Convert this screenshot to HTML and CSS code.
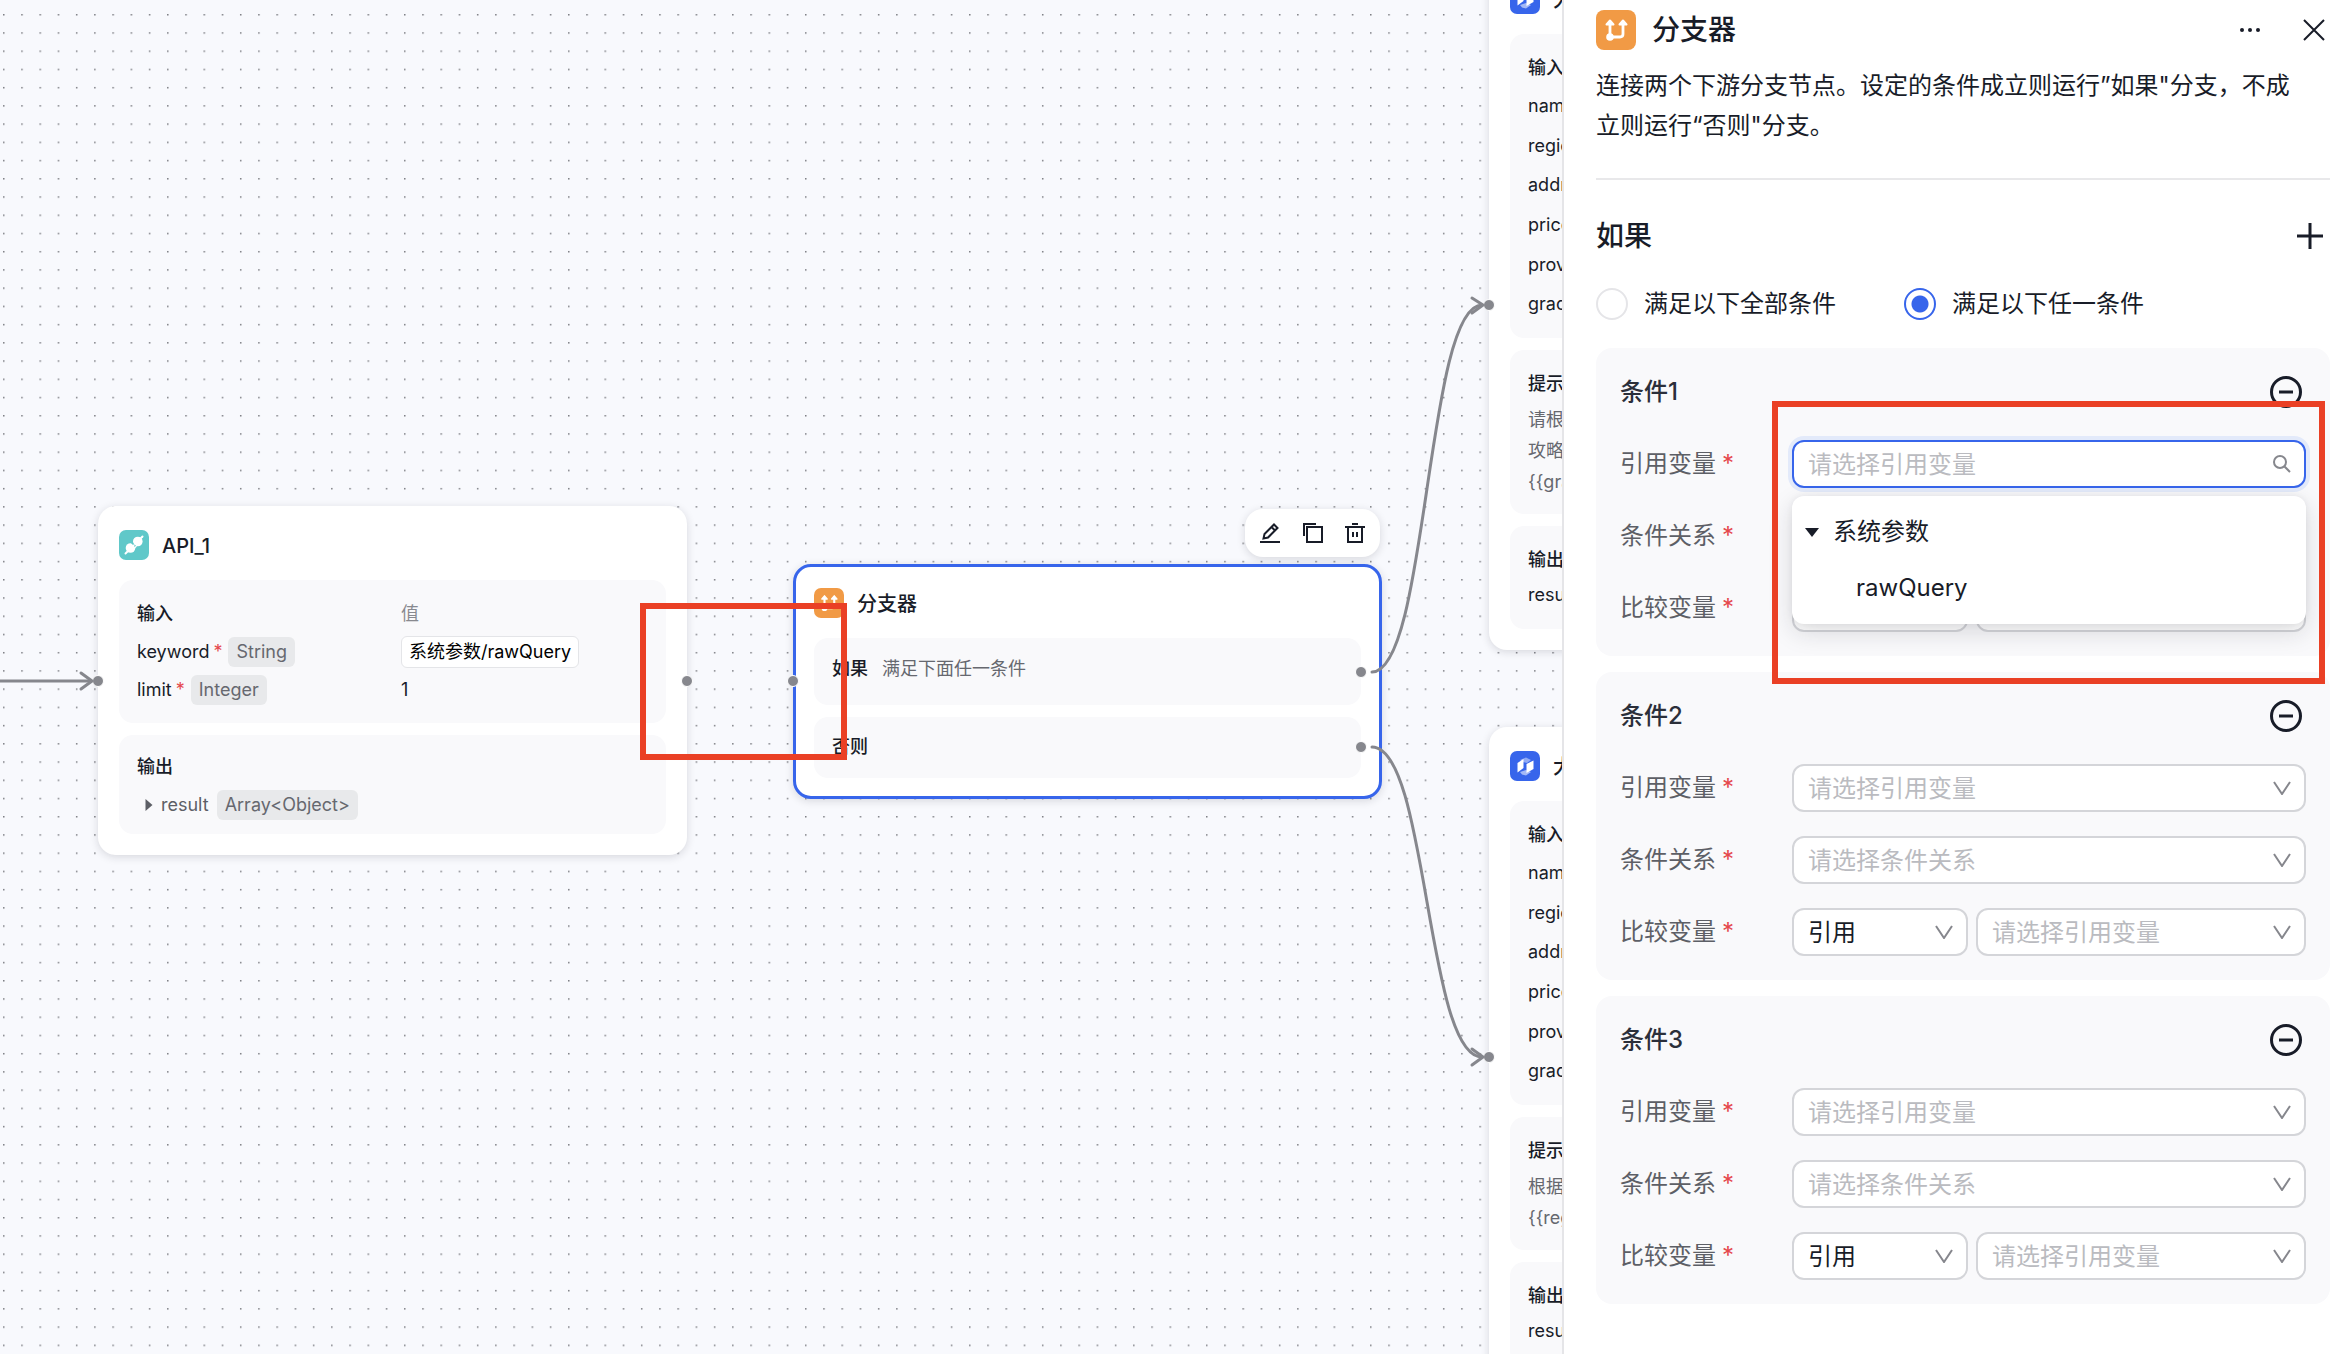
FILE: index.html
```html
<!DOCTYPE html>
<html lang="zh-CN">
<head>
<meta charset="utf-8">
<title>分支器</title>
<link rel="stylesheet" href="styles.css">
</head>
<body>
<svg class="defs" aria-hidden="true">
  <symbol id="chevron" viewBox="0 0 18 14"><path d="M1 1l8 12 8-12" fill="none" stroke="currentColor" stroke-width="2"/></symbol>
  <symbol id="minus" viewBox="0 0 32 32"><circle cx="16" cy="16" r="14.5" fill="none" stroke="currentColor" stroke-width="3"/><path d="M9 16h14" stroke="currentColor" stroke-width="3"/></symbol>
  <symbol id="branch" viewBox="0 0 40 40"><path d="M14 27V14M14 27H24Q27 27 27 24V14" fill="none" stroke="#fff" stroke-width="2.8"/><path d="M14 10.500l3.500 4h-7zM27 10.500l3.500 4h-7z" fill="#fff" stroke="#fff" stroke-width="2" stroke-linejoin="round"/><circle cx="14" cy="27" r="3.800" fill="#fff"/></symbol>
  <symbol id="model" viewBox="0 0 30 30"><path d="M10 9l6-2.500 5 2.500-4 3-4-1z" fill="#fff" opacity=".45"/><path d="M10 21l6-2 5 2-5 3.500-4-1z" fill="#fff" opacity=".55"/><path d="M7.500 12l6-4v9l-6 4.500z" fill="#fff"/><path d="M16.500 13l7-3.500V18l-7 4z" fill="#fff"/></symbol>
</svg>
<div class="app">
  <main class="canvas">
    <svg class="layer" aria-hidden="true">
      <defs><pattern id="grid" x="3" y="14" width="18.227" height="18.227" patternUnits="userSpaceOnUse"><rect width="1.5" height="1.5" fill="#7c7d83"/></pattern></defs>
      <rect width="100%" height="100%" fill="url(#grid)"/>
    </svg>

    <article class="node node-api">
      <header class="node-head"><span class="node-icon teal"><svg viewBox="0 0 30 30"><path d="M6.500 23.500L23.500 6.500" stroke="#fff" stroke-width="2" stroke-linecap="round"/><circle cx="11.500" cy="18" r="4.800" fill="#fff"/><circle cx="18.800" cy="11.500" r="4.800" fill="#fff"/><path d="M11 11l8 8" stroke="#60c8c9" stroke-width="1.600"/><path d="M13.500 16.500l2-2M15.500 18l2-2" stroke="#fff" stroke-width="1.200"/></svg></span><h2>API_1</h2></header>
      <section class="box">
        <div class="pair"><h3>输入</h3><span class="muted">值</span></div>
        <div class="pair"><span>keyword<i class="req">*</i><span class="tag">String</span></span><span><span class="value">系统参数/rawQuery</span></span></div>
        <div class="pair"><span>limit<i class="req">*</i><span class="tag">Integer</span></span><span>1</span></div>
      </section>
      <section class="box">
        <h3>输出</h3>
        <div class="result"><svg viewBox="0 0 7 12"><path d="M0 0l7 6-7 6z" fill="currentColor"/></svg><span>result</span><span class="tag">Array&lt;Object&gt;</span></div>
      </section>
      <span class="port in"></span><span class="port out"></span>
    </article>

    <div class="toolbar">
      <button type="button" aria-label="编辑"><svg viewBox="0 0 20 20"><path d="M0 19H20M3.500 15.500l1-4.500 9.500-9.500 3.500 3.500-9.500 9.500zM11.500 4l3.500 3.500"/></svg></button>
      <button type="button" aria-label="复制"><svg viewBox="0 0 20 20"><path d="M4 4H19V19H4zM1 13V1H13"/></svg></button>
      <button type="button" aria-label="删除"><svg viewBox="0 0 20 20"><path d="M0 4H20M3 4V19H17V4M7 1H13M8 9V14M12 9V14"/></svg></button>
    </div>

    <article class="node node-branch">
      <header class="node-head"><span class="node-icon orange"><svg viewBox="0 0 40 40"><use href="#branch"/></svg></span><h2>分支器</h2></header>
      <section class="box case first"><h3>如果</h3><span>满足下面任一条件</span><span class="port out"></span></section>
      <section class="box case"><h3>否则</h3><span class="port out"></span></section>
      <span class="port in"></span>
    </article>

    <article class="node node-model upper">
      <header class="node-head"><span class="node-icon blue"><svg viewBox="0 0 30 30"><use href="#model"/></svg></span><h2>大模型</h2></header>
      <section class="box"><h3>输入</h3>
        <ul class="params"><li>name</li><li>region</li><li>address</li><li>price</li><li>province</li><li>grade</li></ul></section>
      <section class="box prompt"><h3>提示词</h3><p>请根据<br>攻略<br>{{grade}}</p></section>
      <section class="box output"><h3>输出</h3><div>result</div></section>
      <span class="port in"></span>
    </article>

    <article class="node node-model lower">
      <header class="node-head"><span class="node-icon blue"><svg viewBox="0 0 30 30"><use href="#model"/></svg></span><h2>大模型</h2></header>
      <section class="box"><h3>输入</h3>
        <ul class="params"><li>name</li><li>region</li><li>address</li><li>price</li><li>province</li><li>grade</li></ul></section>
      <section class="box prompt"><h3>提示词</h3><p>根据<br>{{region}}</p></section>
      <section class="box output"><h3>输出</h3><div>result</div></section>
      <span class="port in"></span>
    </article>

    <svg class="layer edge" aria-hidden="true">
      <path d="M0 681H91"/><path d="M81 673l11 8-11 8"/>
      <path d="M1372 672C1428 672 1426 305 1482 305"/><path d="M1472 298l11 7-11 8"/>
      <path d="M1372 747C1428 747 1426 1057 1482 1057"/><path d="M1472 1049l11 8-11 8"/>
    </svg>
    <div class="mark mark-canvas"></div>
  </main>

  <aside class="panel">
    <header class="panel-head">
      <span class="panel-icon"><svg viewBox="0 0 40 40"><use href="#branch"/></svg></span>
      <h1>分支器</h1>
      <button type="button" aria-label="更多"><svg viewBox="0 0 22 22"><g fill="currentColor"><circle cx="3" cy="11" r="2"/><circle cx="11" cy="11" r="2"/><circle cx="19" cy="11" r="2"/></g></svg></button>
      <button type="button" aria-label="关闭"><svg viewBox="0 0 22 22"><path d="M1 1l20 20M21 1L1 21" stroke="currentColor" stroke-width="2"/></svg></button>
    </header>
    <p class="desc">连接两个下游分支节点。设定的条件成立则运行”如果"分支，不成立则运行“否则"分支。</p>
    <div class="if-head"><h2>如果</h2><button type="button" aria-label="添加条件"><svg viewBox="0 0 26 26"><path d="M13 0V26M0 13H26" stroke="currentColor" stroke-width="3"/></svg></button></div>
    <div class="radios">
      <label><input type="radio" name="mode">满足以下全部条件</label>
      <label><input type="radio" name="mode" checked>满足以下任一条件</label>
    </div>

    <section class="cond">
      <header><h3>条件1</h3><button type="button" aria-label="删除条件1"><svg><use href="#minus"/></svg></button></header>
      <div class="row"><label for="r1">引用变量<i class="req">*</i></label>
        <div class="field active"><input id="r1" type="text" placeholder="请选择引用变量"><svg class="search" viewBox="0 0 18 18"><circle cx="7" cy="7" r="6" fill="none" stroke="currentColor" stroke-width="2"/><path d="M11 11l6 6" stroke="currentColor" stroke-width="2"/></svg>
          <div class="popup" role="tree"><div role="treeitem"><svg viewBox="0 0 14 9"><path d="M0 0H14L7 9z" fill="currentColor"/></svg>系统参数</div><div role="treeitem" class="leaf">rawQuery</div></div>
        </div></div>
      <div class="row"><label for="c1">条件关系<i class="req">*</i></label>
        <div class="field"><select id="c1" class="empty"><option>请选择条件关系</option></select><svg><use href="#chevron"/></svg></div></div>
      <div class="row"><label for="t1">比较变量<i class="req">*</i></label>
        <div class="field short"><select id="t1"><option>引用</option></select><svg><use href="#chevron"/></svg></div>
        <div class="field"><select class="empty" aria-label="比较变量1"><option>请选择引用变量</option></select><svg><use href="#chevron"/></svg></div></div>
      <div class="mark mark-panel"></div>
    </section>

    <section class="cond">
      <header><h3>条件2</h3><button type="button" aria-label="删除条件2"><svg><use href="#minus"/></svg></button></header>
      <div class="row"><label for="r2">引用变量<i class="req">*</i></label>
        <div class="field"><select id="r2" class="empty"><option>请选择引用变量</option></select><svg><use href="#chevron"/></svg></div></div>
      <div class="row"><label for="c2">条件关系<i class="req">*</i></label>
        <div class="field"><select id="c2" class="empty"><option>请选择条件关系</option></select><svg><use href="#chevron"/></svg></div></div>
      <div class="row"><label for="t2">比较变量<i class="req">*</i></label>
        <div class="field short"><select id="t2"><option>引用</option></select><svg><use href="#chevron"/></svg></div>
        <div class="field"><select class="empty" aria-label="比较变量2"><option>请选择引用变量</option></select><svg><use href="#chevron"/></svg></div></div>
    </section>

    <section class="cond">
      <header><h3>条件3</h3><button type="button" aria-label="删除条件3"><svg><use href="#minus"/></svg></button></header>
      <div class="row"><label for="r3">引用变量<i class="req">*</i></label>
        <div class="field"><select id="r3" class="empty"><option>请选择引用变量</option></select><svg><use href="#chevron"/></svg></div></div>
      <div class="row"><label for="c3">条件关系<i class="req">*</i></label>
        <div class="field"><select id="c3" class="empty"><option>请选择条件关系</option></select><svg><use href="#chevron"/></svg></div></div>
      <div class="row"><label for="t3">比较变量<i class="req">*</i></label>
        <div class="field short"><select id="t3"><option>引用</option></select><svg><use href="#chevron"/></svg></div>
        <div class="field"><select class="empty" aria-label="比较变量3"><option>请选择引用变量</option></select><svg><use href="#chevron"/></svg></div></div>
    </section>
  </aside>
</div>
</body>
</html>
```
FILE: styles.css
```css
* { box-sizing: border-box; margin: 0; }
body, button, input, select { font-family: Inter, "Noto Sans CJK SC", sans-serif; color: #181c28; }
button { display: grid; place-items: center; padding: 0; border: 0; background: none; }
h1, h2, h3 { font-weight: 500; }
svg { display: block; }
.defs { position: absolute; width: 0; height: 0; }
.app { display: grid; grid-template-columns: 781fr 391fr; height: 100vh; overflow: hidden; }

/* canvas */
.canvas { position: relative; overflow: hidden; background: #f8f9fd; font-size: 18px; line-height: 30px; }
.layer { position: absolute; inset: 0; width: 100%; height: 100%; pointer-events: none; }
.edge { fill: none; stroke: #86878d; stroke-width: 3; stroke-linecap: round; stroke-linejoin: round; }
.node { position: absolute; display: flex; flex-direction: column; gap: 12px; width: 589px; padding: 24px 21px 21px; border-radius: 18px; background: #fff; box-shadow: 0 2px 8px rgba(24, 28, 40, .15); }
.node-api { left: 98px; top: 506px; }
.node-branch { left: 793px; top: 564px; padding: 21px 18px 18px; border: 3px solid #3765eb; }
.node-model { left: 1489px; }
.upper { top: -40px; }
.lower { top: 727px; }
.node-head { display: flex; align-items: center; gap: 13px; height: 30px; margin-bottom: 8px; }
.node-head h2 { padding-top: 2px; font-size: 20px; }
.node-icon { width: 30px; height: 30px; border-radius: 7px; }
.teal { background: #60c8c9; }
.orange, .panel-icon { background: #f19a45; }
.blue { background: #3765eb; }
.box { position: relative; padding: 19px 18px 14px; border-radius: 14px; background: #f9f9fb; }
.box h3 { font-size: 18px; }
.pair { display: grid; grid-template-columns: 264px 1fr; align-items: center; height: 38px; }
.pair:first-child { height: 30px; margin-bottom: 4px; }
.muted { color: #88898f; }
.req { margin: 0 6px 0 4px; color: #e5484d; font-style: normal; }
.tag { display: inline-block; padding: 0 8px; border-radius: 6px; background: #e8e9eb; color: #66686f; }
.value { display: inline-block; padding: 0 7px; border: 1px solid #e4e5e8; border-radius: 6px; background: #fff; color: #000; }
.node-api .box + .box { padding-top: 17px; }
.result { display: flex; align-items: center; gap: 8px; margin-top: 8px; padding-left: 8px; color: #5d5f66; }
.result svg { width: 8px; height: 12px; }
.port { position: absolute; width: 12px; height: 12px; border: 1px solid #fff; border-radius: 50%; background: #86878d; }
.port.in { left: -6px; top: 169px; }
.port.out { right: -6px; top: 169px; }
.node-branch > .port.in { left: -9px; top: 108px; }
.case { display: flex; gap: 14px; height: 61px; padding-top: 15px; color: #66686f; }
.case h3 { color: #181c28; }
.case.first { height: 67px; padding-top: 16px; }
.case .port.out { top: 24px; }
.case.first .port.out { top: 28px; }
.node-model .port.in { top: 339px; }
.lower .port.in { top: 324px; }
.params { display: flex; flex-direction: column; height: 238px; margin-top: 3px; padding: 0; list-style: none; }
.params li { flex: 1; display: flex; align-items: center; }
.prompt p { margin: 5px 0 3px; color: #66686f; line-height: 31px; }
.output div { margin: 5px 0; }
.toolbar { position: absolute; left: 1245px; top: 509px; display: flex; justify-content: space-between; width: 135px; padding: 14px 15px; border-radius: 18px; background: #fff; box-shadow: 0 2px 8px rgba(24, 28, 40, .15); }
.toolbar svg { width: 20px; height: 20px; fill: none; stroke: #181c28; stroke-width: 2; }
.mark { position: absolute; border: 6px solid #ea4025; pointer-events: none; }
.mark-canvas { left: 640px; top: 603px; width: 207px; height: 157px; }

/* side panel */
.panel { display: flex; flex-direction: column; padding: 10px 14px 0 32px; border-left: 2px solid #e5e5e8; background: #fff; font-size: 24px; line-height: 40px; }
.panel-head { display: flex; align-items: center; gap: 16px; height: 40px; padding-right: 5px; }
.panel-icon { width: 40px; height: 40px; border-radius: 8px; }
.panel-head h1 { flex: 1; font-size: 28px; }
.panel-head button + button { margin-left: 26px; }
.panel-head button svg { width: 22px; height: 22px; }
.desc { padding: 16px 20px 32px 0; border-bottom: 2px solid #e8e8ea; }
.if-head { display: flex; align-items: center; justify-content: space-between; height: 40px; margin-top: 36px; padding-right: 7px; }
.if-head h2 { font-size: 28px; }
.if-head svg { width: 26px; height: 26px; }
.radios { display: flex; gap: 68px; margin: 28px 0 24px; }
.radios label { display: flex; align-items: center; gap: 16px; }
.radios input { appearance: none; width: 32px; height: 32px; margin: 0; border: 2px solid #e5e5e8; border-radius: 50%; }
.radios input:checked { border-color: #3765eb; background: radial-gradient(circle, #3765eb 8px, transparent 9px); }
.cond { position: relative; display: flex; flex-direction: column; gap: 24px; margin-bottom: 16px; padding: 24px; border-radius: 16px; background: #f9f9fb; }
.cond header { display: flex; align-items: center; justify-content: space-between; height: 40px; margin-bottom: 4px; padding-right: 4px; }
.cond h3 { font-size: 24px; color: #2b2f3a; }
.cond header svg { width: 32px; height: 32px; }
.row { display: flex; align-items: center; gap: 8px; }
.row label { width: 164px; color: #5d5f66; }
.row .req { margin-left: 6px; }
.field { position: relative; flex: 1; }
.field.short { flex: 0 0 176px; }
.field input, .field select { display: block; width: 100%; height: 48px; padding: 0 14px; border: 2px solid #d4d5d9; border-radius: 12px; outline: 0; background: #fff; font-size: 24px; appearance: none; }
.field .empty, .field input::placeholder { color: #babbc0; opacity: 1; }
.field.active input { border-color: #3765eb; box-shadow: 0 0 0 4px #e3eafa; }
.field > svg { position: absolute; right: 15px; top: 17px; width: 18px; height: 14px; color: #86878d; }
.field > .search { top: 15px; width: 18px; height: 18px; }
.popup { position: absolute; z-index: 1; inset: 56px 0 auto; padding: 12px 13px 4px; border-radius: 12px; background: #fff; box-shadow: 0 8px 24px rgba(24, 28, 40, .15), 0 0 6px rgba(24, 28, 40, .06); }
.popup div { display: flex; align-items: center; gap: 14px; height: 48px; }
.popup svg { width: 14px; height: 9px; }
.popup .leaf { height: 64px; padding-left: 51px; }
.mark-panel { z-index: 2; left: 176px; right: 5px; top: 53px; height: 283px; }
```
